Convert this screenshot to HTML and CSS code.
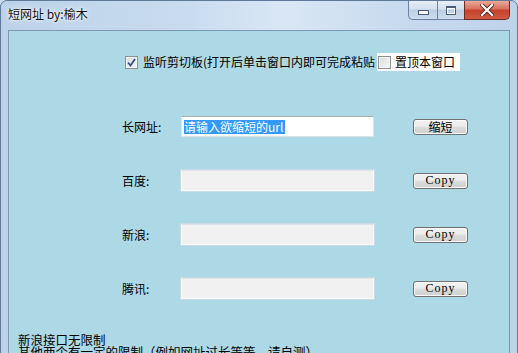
FILE: index.html
```html
<!DOCTYPE html>
<html lang="zh-CN">
<head>
  <meta charset="UTF-8">
  <title>短网址 by:榆木</title>
  <link rel="stylesheet" href="styles.css">
</head>
<body>
  <div class="window">
    <div class="titlebar">
      <span class="title">短网址 by:榆木</span>
      <div class="caption-btns">
        <span class="cap min"><i></i></span>
        <span class="cap max"><i></i></span>
        <span class="cap close">
          <svg width="14" height="12" viewBox="0 0 14 12">
            <path d="M2 1 L12 11 M12 1 L2 11" stroke="#5a1f18" stroke-width="4" stroke-linecap="square"/>
            <path d="M2 1 L12 11 M12 1 L2 11" stroke="#fff" stroke-width="2.2" stroke-linecap="square"/>
          </svg>
        </span>
      </div>
    </div>
    <div class="client">
      <div class="opts">
        <label class="chk">
          <span class="box">
            <svg width="9" height="9" viewBox="0 0 9 9"><path d="M1 4.5 L3.5 7.5 L8 1" fill="none" stroke="#3a4f8f" stroke-width="1.8"/></svg>
          </span>
          监听剪切板(打开后单击窗口内即可完成粘贴
        </label>
        <label class="chk ontop"><span class="box"></span>置顶本窗口</label>
      </div>
      <div class="form">
        <div class="row">
          <span class="lbl">长网址:</span>
          <div class="tb"><span class="sel">请输入欲缩短的url</span></div>
          <button class="btn">缩短</button>
        </div>
        <div class="row">
          <span class="lbl">百度:</span>
          <div class="tb off"></div>
          <button class="btn copy">Copy</button>
        </div>
        <div class="row">
          <span class="lbl">新浪:</span>
          <div class="tb off"></div>
          <button class="btn copy">Copy</button>
        </div>
        <div class="row">
          <span class="lbl">腾讯:</span>
          <div class="tb off"></div>
          <button class="btn copy">Copy</button>
        </div>
      </div>
      <p class="note">新浪接口无限制<br>其他两个有一定的限制（例如网址过长等等，请自测）</p>
    </div>
  </div>
</body>
</html>
```

FILE: styles.css
```css
html, body {
  margin: 0;
  padding: 0;
  width: 518px;
  height: 353px;
  overflow: hidden;
  background: #c9dcf0;
  font-family: 'Noto Sans CJK SC', 'Liberation Sans', sans-serif;
  font-size: 12px;
  color: #000;
}
.window {
  width: 518px;
  height: 380px;
  box-sizing: border-box;
  border: 1px solid #5f7a98;
  border-radius: 7px 7px 0 0;
  background: linear-gradient(to right, #bcd2ea 0%, #c8dbef 35%, #d9e7f5 55%, #c6d9ee 80%, #bdd3ea 100%);
  display: flex;
  flex-direction: column;
  padding: 0 7px 0 7px;
}
.titlebar {
  height: 29px;
  display: flex;
  align-items: flex-start;
  justify-content: space-between;
}
.title {
  margin-top: 5px;
  font-size: 12px;
  line-height: 16px;
  color: #111;
  text-shadow: 0 0 6px #fff, 0 0 3px #fff;
}
.caption-btns {
  display: flex;
}
.cap {
  height: 19px;
  box-sizing: border-box;
  border: 1px solid #6b819c;
  border-top: none;
  display: flex;
  align-items: center;
  justify-content: center;
  background: linear-gradient(#e6eef8, #d3e0ef 45%, #bccfe6 50%, #cbdcee);
}
.cap.min {
  width: 29px;
  border-radius: 0 0 0 5px;
  border-right: none;
}
.cap.max {
  width: 27px;
  border-right: none;
}
.cap.close {
  width: 46px;
  border-color: #6b2a22;
  border-radius: 0 0 5px 0;
  background: linear-gradient(#e9a99b, #d7705e 45%, #c4412e 50%, #cf5a42);
}
.cap.min i {
  width: 9px;
  height: 3px;
  margin-top: 5px;
  background: #fff;
  border: 1px solid #4b5d74;
}
.cap.max i {
  width: 8px;
  height: 6px;
  border: 1px solid #4b5d74;
  border-top-width: 2px;
  background: transparent;
  box-shadow: inset 0 0 0 1px #fff;
}
.client {
  flex: 1;
  background: #add8e6;
  border: 1px solid #7e96b2;
}
.opts {
  display: flex;
  align-items: center;
  margin-top: 22px;
  padding-left: 116px;
  height: 18px;
}
.chk {
  display: flex;
  align-items: center;
  gap: 5px;
  line-height: 16px;
  white-space: nowrap;
}
.chk.ontop {
  background: #fff;
  margin-left: 2px;
  padding: 1px 5px 1px 1px;
  gap: 4px;
}
.box {
  width: 13px;
  height: 13px;
  box-sizing: border-box;
  border: 1px solid #8e8f8f;
  background: linear-gradient(135deg, #dcdcdc, #f6f6f6);
  box-shadow: inset 0 0 0 1px #f4f4f4;
  display: flex;
  align-items: center;
  justify-content: center;
}
.form {
  display: flex;
  flex-direction: column;
  gap: 33px;
  margin-top: 45px;
  padding-left: 113px;
}
.row {
  display: flex;
  align-items: center;
  height: 21px;
}
.lbl {
  width: 59px;
  line-height: 16px;
}
.tb {
  width: 193px;
  height: 21px;
  box-sizing: border-box;
  background: #fff;
  border: 1px solid #dbdfe6;
  border-top-color: #abadb3;
  border-left-color: #e2e3ea;
  padding: 2px 2px;
  display: flex;
  align-items: center;
}
.tb.off {
  background: #f2f1f1;
  border: 1px solid #f9f9f9;
  border-top-color: #dde3ea;
  box-shadow: 0 0 0 1px #c9dbe3;
}
.sel {
  background: #3399ff;
  color: #fff;
  line-height: 14px;
  padding-right: 2px;
}
.btn {
  margin-left: 39px;
  width: 55px;
  height: 16px;
  padding: 0;
  box-sizing: border-box;
  border: 1px solid #707070;
  border-radius: 3px;
  background: linear-gradient(#f2f2f2 0%, #ebebeb 45%, #dddddd 50%, #cfcfcf 100%);
  box-shadow: inset 0 0 0 1px #fcfcfc;
  font-family: 'Noto Sans CJK SC', sans-serif;
  font-size: 12px;
  line-height: 13px;
  color: #000;
}
.btn.copy {
  font-family: 'Liberation Serif', serif;
  font-size: 12px;
  letter-spacing: 1px;
}
.note {
  margin: 35px 0 0 9px;
  font-size: 12.5px;
  line-height: 12px;
}
```
